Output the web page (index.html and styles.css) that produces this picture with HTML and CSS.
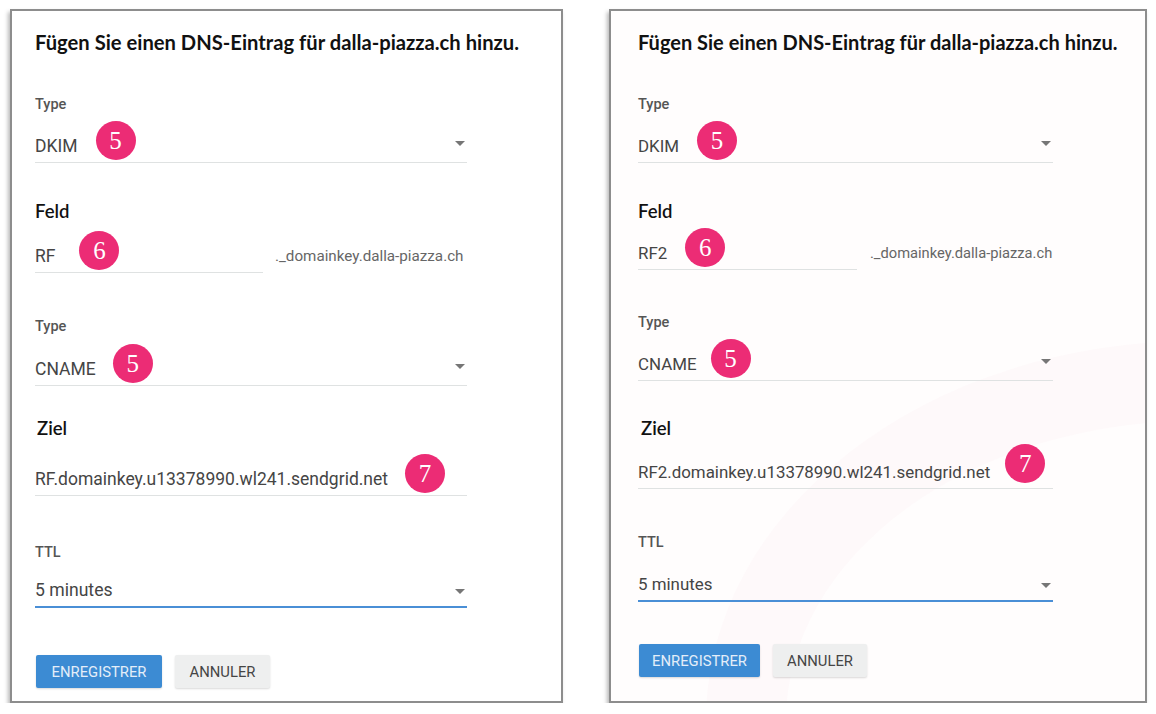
FILE: index.html
```html
<!DOCTYPE html>
<html lang="de">
<head>
<meta charset="utf-8">
<title>DNS-Eintrag</title>
<link rel="stylesheet" href="styles.css">
</head>
<body>
<div class="page">
  <section class="panel panel-a">
    <h1 class="title">Fügen Sie einen DNS-Eintrag für dalla-piazza.ch hinzu.</h1>

    <div class="field f1">
      <div class="label">Type</div>
      <div class="row">
        <span class="value">DKIM</span>
        <span class="badge">5</span>
        <span class="arrow"></span>
      </div>
    </div>

    <div class="field f2">
      <div class="label-big">Feld</div>
      <div class="split">
        <div class="row short">
          <span class="value">RF</span>
          <span class="badge">6</span>
        </div>
        <span class="suffix">._domainkey.dalla-piazza.ch</span>
      </div>
    </div>

    <div class="field f3">
      <div class="label">Type</div>
      <div class="row">
        <span class="value">CNAME</span>
        <span class="badge">5</span>
        <span class="arrow"></span>
      </div>
    </div>

    <div class="field f4">
      <div class="label-big">Ziel</div>
      <div class="row">
        <span class="value">RF.domainkey.u13378990.wl241.sendgrid.net</span>
        <span class="badge">7</span>
      </div>
    </div>

    <div class="field f5">
      <div class="label">TTL</div>
      <div class="row plain focused">
        <span class="value big">5 minutes</span>
        <span class="arrow"></span>
      </div>
    </div>

    <div class="actions">
      <button class="btn btn-primary">ENREGISTRER</button>
      <button class="btn btn-flat">ANNULER</button>
    </div>
  </section>

  <section class="panel panel-b">
    <div class="swoosh"></div>
    <h1 class="title">Fügen Sie einen DNS-Eintrag für dalla-piazza.ch hinzu.</h1>

    <div class="field f1">
      <div class="label">Type</div>
      <div class="row">
        <span class="value">DKIM</span>
        <span class="badge">5</span>
        <span class="arrow"></span>
      </div>
    </div>

    <div class="field f2">
      <div class="label-big">Feld</div>
      <div class="split">
        <div class="row short">
          <span class="value">RF2</span>
          <span class="badge">6</span>
        </div>
        <span class="suffix">._domainkey.dalla-piazza.ch</span>
      </div>
    </div>

    <div class="field f3">
      <div class="label">Type</div>
      <div class="row">
        <span class="value">CNAME</span>
        <span class="badge">5</span>
        <span class="arrow"></span>
      </div>
    </div>

    <div class="field f4">
      <div class="label-big">Ziel</div>
      <div class="row">
        <span class="value">RF2.domainkey.u13378990.wl241.sendgrid.net</span>
        <span class="badge">7</span>
      </div>
    </div>

    <div class="field f5">
      <div class="label">TTL</div>
      <div class="row plain focused">
        <span class="value big">5 minutes</span>
        <span class="arrow"></span>
      </div>
    </div>

    <div class="actions">
      <button class="btn btn-primary">ENREGISTRER</button>
      <button class="btn btn-flat">ANNULER</button>
    </div>
  </section>
</div>
</body>
</html>
```

FILE: styles.css
```css
* { box-sizing: border-box; }

html, body {
  margin: 0;
  padding: 0;
  background: #ffffff;
}

.page {
  display: flex;
  gap: 46px;
  padding: 9px 0 0 10px;
}

.panel {
  position: relative;
  height: 694px;
  border: 2px solid #8d8d8d;
  background: #ffffff;
  box-shadow: -2px 3px 4px rgba(0, 0, 0, 0.28);
  overflow: hidden;
}

.panel-a {
  width: 553px;
  padding: 20px 0 0 23px;
}

.panel-b {
  width: 538px;
  padding: 20px 0 0 27px;
  background: #fffdfd;
}

.swoosh {
  position: absolute;
  left: 95px;
  top: 330px;
  width: 980px;
  height: 760px;
  border-radius: 50%;
  border: 80px solid rgba(252, 236, 241, 0.22);
  pointer-events: none;
}

.title {
  position: relative;
  margin: 0;
  font-family: "Lato", "Noto Sans", sans-serif;
  font-weight: 700;
  font-size: 20.2px;
  line-height: 22px;
  color: #111111;
  white-space: nowrap;
}

.panel-b .title { font-size: 20px; }

.field { position: relative; }

.label {
  font-family: "Roboto", "Liberation Sans", sans-serif;
  font-weight: 500;
  font-size: 14.5px;
  line-height: 16px;
  color: #555555;
}

.label-big {
  font-family: "Lato", "Noto Sans", sans-serif;
  font-weight: 600;
  font-size: 18.5px;
  line-height: 20px;
  color: #111111;
}

.row {
  display: flex;
  align-items: flex-end;
  border-bottom: 1px solid #dfe2e2;
  height: 42px;
}

.panel-a .row { width: 432px; }
.panel-b .row { width: 415px; }
.panel-a .row.short { width: 228px; }
.panel-b .row.short { width: 219px; }

.row.plain { height: 28px; }
.row.focused { border-bottom: 2px solid #4a8fd6; }

.value {
  font-family: "Roboto", "Liberation Sans", sans-serif;
  font-size: 17.5px;
  line-height: 20px;
  padding-bottom: 6px;
  color: #454545;
  white-space: nowrap;
}

.value.big { font-size: 17.6px; }
.panel-b .value { font-size: 16.9px; }
.panel-b .value.big { font-size: 16.9px; }

.badge {
  width: 40px;
  height: 39px;
  margin: 0 0 2px 18px;
  border-radius: 50%;
  background: #ec2c75;
  color: #ffffff;
  font-family: "Liberation Serif", "DejaVu Serif", serif;
  font-size: 25px;
  line-height: 39px;
  text-align: center;
}

.arrow {
  margin-left: auto;
  margin-right: 2px;
  margin-bottom: 16px;
  width: 0;
  height: 0;
  border-left: 5px solid transparent;
  border-right: 5px solid transparent;
  border-top: 5px solid #767676;
}

.row.plain .arrow { margin-bottom: 12px; }

.split {
  display: flex;
  align-items: flex-end;
}

.suffix {
  font-family: "Roboto", "Liberation Sans", sans-serif;
  font-size: 15.2px;
  line-height: 18px;
  color: #666666;
  margin-left: 12px;
  padding-bottom: 8px;
  white-space: nowrap;
}

.panel-b .suffix { font-size: 14.7px; margin-left: 13px; }

/* vertical rhythm – left panel */
.panel-a .f1 { margin-top: 44px; }
.panel-a .f1 .row { margin-top: 8px; }
.panel-a .f2 { margin-top: 38px; }
.panel-a .f2 .row { margin-top: 10px; }
.panel-a .f3 { margin-top: 46px; }
.panel-a .f3 .row { margin-top: 9px; }
.panel-a .f4 { margin-top: 32px; }
.panel-a .f4 .label-big { padding-left: 2px; }
.panel-a .f4 .row { margin-top: 16px; }
.panel-a .f5 { margin-top: 49px; }
.panel-a .f5 .row { margin-top: 19px; }
.panel-a .actions { margin-top: 47px; }
.panel-a .f3 .badge { margin-left: 17px; }
.panel-a .f2 .badge { margin-left: 24px; }
.panel-a .f4 .badge { margin-left: 17px; }

/* vertical rhythm – right panel */
.panel-b .f1 { margin-top: 44px; }
.panel-b .f1 .row { margin-top: 8px; }
.panel-b .f2 { margin-top: 38px; }
.panel-b .f2 .row { margin-top: 7px; }
.panel-b .f3 { margin-top: 45px; }
.panel-b .f3 .row { margin-top: 8px; }
.panel-b .f4 { margin-top: 37px; }
.panel-b .f4 .label-big { padding-left: 3px; }
.panel-b .f4 .row { margin-top: 9px; }
.panel-b .f5 { margin-top: 46px; }
.panel-b .f5 .row { margin-top: 23px; }
.panel-b .actions { margin-top: 42px; }
.panel-b .f3 .badge { margin-left: 14px; }
.panel-b .f4 .badge { margin-left: 15px; margin-bottom: 5px; }

.actions {
  position: relative;
  display: flex;
  gap: 13px;
  padding-left: 1px;
}

.btn {
  height: 33px;
  border: none;
  border-radius: 2px;
  font-family: "Roboto", "Liberation Sans", sans-serif;
  font-size: 14.8px;
  font-weight: 400;
  box-shadow: 0 1px 2px rgba(0, 0, 0, 0.15);
  cursor: pointer;
}

.btn-primary {
  background: #3c8bd3;
  color: #e4eef9;
}

.panel-a .btn-primary { width: 126px; }
.panel-b .btn-primary { width: 121px; }

.btn-flat {
  background: #eeefef;
  color: #454545;
}

.panel-a .btn-flat { width: 95px; }
.panel-b .btn-flat { width: 94px; }
```
